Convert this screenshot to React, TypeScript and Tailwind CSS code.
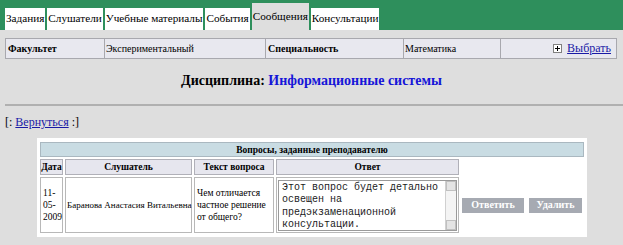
import React from "react";

const tabs = ["Задания", "Слушатели", "Учебные материалы", "События", "Сообщения", "Консультации"];

function PlusBox() {
  return (
    <svg width="9" height="9" viewBox="0 0 9 9" className="inline-block">
      <rect x="0.5" y="0.5" width="8" height="8" fill="#fff" stroke="#808080" />
      <path d="M2 4.5h5M4.5 2v5" stroke="#000" strokeWidth="1" />
    </svg>
  );
}

function FakeTextarea() {
  return (
    <div className="flex h-[51px] w-[179px] border border-[#9a9a9a] bg-white">
      <div className="flex-1 overflow-hidden pl-[3px] pt-[1px] font-['Liberation_Mono',monospace] text-[10px] leading-[12.5px] text-[#222]">
        Этот вопрос будет детально
        <br />
        освещен на
        <br />
        предэкзаменационной
        <br />
        консультации.
      </div>
      <div className="flex w-[11px] flex-col justify-between border-l border-[#d0d0d0] bg-[#f4f4f4]">
        <div className="h-[10px] border border-[#c0c0c0] bg-[#e4e4e4]" />
        <div className="h-[10px] border border-[#c0c0c0] bg-[#e4e4e4]" />
      </div>
    </div>
  );
}

export default function App() {
  return (
    <div className="h-[245px] w-[623px] overflow-hidden bg-[#dedede] font-['Liberation_Serif',serif] text-black">
      <div className="flex h-[30px] items-end gap-[2px] bg-[#2e8f5c] pl-[5px]">
        {tabs.map((t) => (
          <div
            key={t}
            className={
              t === "Сообщения"
                ? "flex h-[27px] items-center bg-[#dedede] px-[1px] text-[11.2px] leading-none"
                : "flex h-[22px] items-center bg-white px-[1px] text-[11.2px] leading-none"
            }
          >
            {t}
          </div>
        ))}
      </div>

      <table className="ml-[5px] mt-[8px] w-[612px] table-fixed border-collapse bg-[#e8e8ef] text-[10px]">
        <tbody>
          <tr className="h-[20px]">
            <td className="w-[99px] border border-[#a8a8ae] px-[2px] font-bold">Факультет</td>
            <td className="w-[161px] border border-[#a8a8ae] px-[1px]">Экспериментальный</td>
            <td className="w-[138px] border border-[#a8a8ae] px-[2px] font-bold">Специальность</td>
            <td className="w-[97px] border border-[#a8a8ae] px-[1px]">Математика</td>
            <td className="border border-[#a8a8ae] px-[5px] text-right text-[12px]">
              <span className="inline-flex items-center gap-[5px]">
                <PlusBox />
                <a className="text-[#1a1aa6] underline">Выбрать</a>
              </span>
            </td>
          </tr>
        </tbody>
      </table>

      <div className="mt-[12px] text-center text-[14px] font-bold leading-[20px]">
        Дисциплина: <span className="text-[#1515d8]">Информационные системы</span>
      </div>

      <div className="ml-[5px] mt-[13px] border-t-2 border-[#b0b0b0]" />

      <div className="ml-[5px] mt-[9px] text-[12px] leading-[14px]">
        [: <a className="text-[#1a1aa6] underline">Вернуться</a> :]
      </div>

      <div className="ml-[37px] mt-[9px] w-[550px] bg-white px-[1px] pb-[2px] pt-[2px]">
        <table className="w-full table-fixed border-separate border-spacing-[2px] text-[9.5px] leading-[12px]">
          <colgroup>
            <col className="w-[23px]" />
            <col className="w-[127px]" />
            <col className="w-[80px]" />
            <col className="w-[183px]" />
            <col />
          </colgroup>
          <tbody>
            <tr>
              <td colSpan={5} className="h-[15px] border border-[#aab8c0] bg-[#c9dce3] text-center font-bold">
                Вопросы, заданные преподавателю
              </td>
            </tr>
            <tr className="h-[16px] bg-[#e6e6ee] text-center font-bold">
              <td className="border border-[#b0b0b8]">Дата</td>
              <td className="border border-[#b0b0b8]">Слушатель</td>
              <td className="border border-[#b0b0b8]">Текст вопроса</td>
              <td className="border border-[#b0b0b8]">Ответ</td>
              <td className="border-0 bg-white" />
            </tr>
            <tr className="h-[56px]">
              <td className="border border-[#b8b8b8] px-[2px]">
                11-
                <br />
                05-
                <br />
                2009
              </td>
              <td className="whitespace-nowrap border border-[#b8b8b8] px-[1px] text-[9px]">Баранова Анастасия Витальевна</td>
              <td className="border border-[#b8b8b8] px-[2px]">Чем отличается частное решение от общего?</td>
              <td className="border border-[#b8b8b8] p-[1px]">
                <FakeTextarea />
              </td>
              <td className="pl-[1px]">
                <div className="flex gap-[5px]">
                  <button className="h-[15px] w-[62px] bg-[#a6aab2] text-[10px] font-bold text-white">Ответить</button>
                  <button className="h-[15px] w-[53px] bg-[#a6aab2] text-[10px] font-bold text-white">Удалить</button>
                </div>
              </td>
            </tr>
          </tbody>
        </table>
      </div>
    </div>
  );
}
